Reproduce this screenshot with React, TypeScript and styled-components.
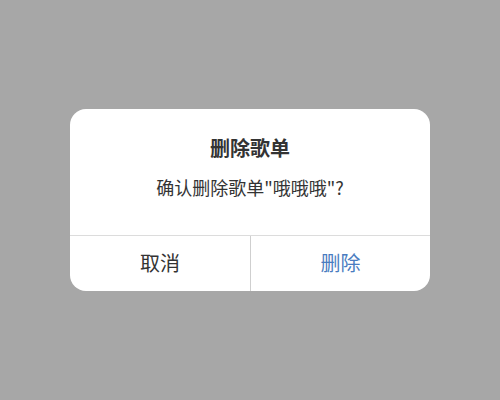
import React from "react"
import styled, { createGlobalStyle } from "styled-components"

const GlobalStyle = createGlobalStyle`
  html, body {
    margin: 0;
    padding: 0;
    background: #a7a7a7;
    font-family: "Noto Sans CJK SC", "Noto Sans", sans-serif;
  }
`

const Overlay = styled.div`
  display: flex;
  width: 500px;
  height: 400px;
  align-items: center;
  justify-content: center;
  background: #a7a7a7;
`

const Dialog = styled.div`
  display: flex;
  flex-direction: column;
  width: 360px;
  background: #fff;
  border-radius: 16px;
  overflow: hidden;
`

const Body = styled.div`
  display: flex;
  flex-direction: column;
  align-items: center;
  height: 127px;
  padding-top: 25px;
  box-sizing: border-box;
  border-bottom: 1px solid #dcdcdc;
`

const Title = styled.h2`
  margin: 0;
  font-size: 20px;
  font-weight: 700;
  line-height: 28px;
  color: #333;
`

const Message = styled.p`
  margin: 12px 0 0;
  font-size: 18px;
  line-height: 26px;
  color: #333;
`

const Actions = styled.div`
  display: grid;
  grid-template-columns: 1fr 1fr;
  height: 55px;
`

const Button = styled.button<{ $primary?: boolean }>`
  border: none;
  background: transparent;
  font-family: inherit;
  font-size: 20px;
  padding: 0 0 2px;
  color: ${(p) => (p.$primary ? "#4a7cc0" : "#333")};
  & + & {
    border-left: 1px solid #cfcfcf;
  }
`

export default function App() {
  return (
    <>
      <GlobalStyle />
      <Overlay>
        <Dialog>
          <Body>
            <Title>删除歌单</Title>
            <Message>确认删除歌单"哦哦哦"?</Message>
          </Body>
          <Actions>
            <Button>取消</Button>
            <Button $primary>删除</Button>
          </Actions>
        </Dialog>
      </Overlay>
    </>
  )
}
